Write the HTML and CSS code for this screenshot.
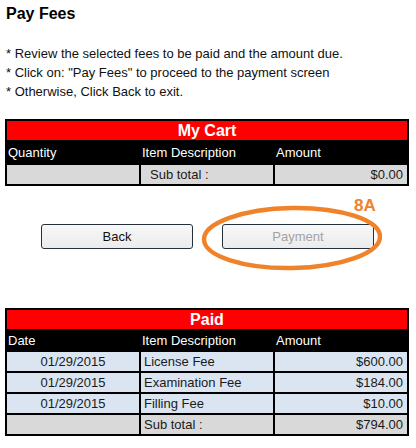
FILE: index.html
```html
<!DOCTYPE html>
<html>
<head>
<meta charset="utf-8">
<link rel="stylesheet" href="styles.css">
</head>
<body>
<h1 class="title">Pay Fees</h1>
<div class="notes">
  <div>* Review the selected fees to be paid and the amount due.</div>
  <div>* Click on: "Pay Fees" to proceed to the payment screen</div>
  <div>* Otherwise, Click Back to exit.</div>
</div>

<table class="grid cart">
  <tr><td colspan="3" class="caption">My Cart</td></tr>
  <tr class="head"><td>Quantity</td><td>Item Description</td><td>Amount</td></tr>
  <tr class="sub"><td></td><td class="subl">Sub total :</td><td class="amt">$0.00</td></tr>
</table>

<div class="actions">
  <button class="btn">Back</button>
  <button class="btn disabled">Payment</button>
  <svg class="ring" width="184" height="68" viewBox="0 0 184 68">
    <ellipse cx="92" cy="34" rx="88" ry="30" fill="none" stroke="#f0822a" stroke-width="4.4" transform="rotate(-1 92 34)"/>
  </svg>
  <span class="tag">8A</span>
</div>

<table class="grid paid">
  <tr><td colspan="3" class="caption">Paid</td></tr>
  <tr class="head"><td>Date</td><td>Item Description</td><td>Amount</td></tr>
  <tr class="row"><td class="date">01/29/2015</td><td class="desc">License Fee</td><td class="amt">$600.00</td></tr>
  <tr class="row"><td class="date">01/29/2015</td><td class="desc">Examination Fee</td><td class="amt">$184.00</td></tr>
  <tr class="row"><td class="date">01/29/2015</td><td class="desc">Filling Fee</td><td class="amt">$10.00</td></tr>
  <tr class="sub"><td></td><td class="desc">Sub total :</td><td class="amt">$794.00</td></tr>
</table>
</body>
</html>
```

FILE: styles.css
```css
html, body {
  margin: 0;
  padding: 0;
  background: #ffffff;
}
body {
  padding: 0 5px;
  font-family: "Liberation Sans", Arial, sans-serif;
  color: #111;
}
.title {
  margin: 5px 0 0 1px;
  font-size: 16px;
  font-weight: bold;
  line-height: 18px;
  color: #000;
}
.notes {
  margin: 21px 0 0 1px;
  font-size: 13px;
  line-height: 19px;
  color: #111;
}
.grid {
  width: 404px;
  table-layout: fixed;
  border-collapse: separate;
  border-spacing: 2px;
  background: #000;
  font-size: 13px;
}
.grid td {
  padding: 0 1px;
  vertical-align: middle;
  white-space: nowrap;
  overflow: hidden;
}
.cart {
  margin-top: 18px;
}
.caption {
  background: #ff0000;
  color: #fff;
  font-weight: bold;
  font-size: 16px;
  text-align: center;
  height: 19px;
}
.grid td.caption {
  padding: 0;
}
.head td {
  background: #000;
  color: #fff;
}
.cart .head td {
  height: 21px;
}
.paid .head td {
  height: 19px;
}
.sub td {
  background: #d9d9d9;
  height: 19px;
  color: #1a1a1a;
}
.row td {
  background: #dbe5f1;
  height: 19px;
  color: #1a1a1a;
}
.grid td.subl {
  padding-left: 9px;
}
.grid td.desc {
  padding-left: 3px;
}
.grid td.date {
  text-align: center;
}
.grid td.amt {
  text-align: right;
  padding-right: 4px;
}
.actions {
  position: relative;
  display: flex;
  gap: 29px;
  margin-top: 38px;
  padding-left: 36px;
}
.btn {
  width: 152px;
  height: 25px;
  margin: 0;
  padding: 0;
  border: 1px solid #26303c;
  border-radius: 3px;
  background: linear-gradient(#f8f8f8, #ebebeb);
  font-family: "Liberation Sans", Arial, sans-serif;
  font-size: 13px;
  color: #111;
}
.btn.disabled {
  color: #a3a3a3;
}
.ring {
  position: absolute;
  left: 195px;
  top: -20px;
}
.tag {
  position: absolute;
  left: 349px;
  top: -27px;
  font-size: 17px;
  line-height: 17px;
  font-weight: bold;
  color: #f0822a;
}
.paid {
  margin-top: 59px;
}
```
